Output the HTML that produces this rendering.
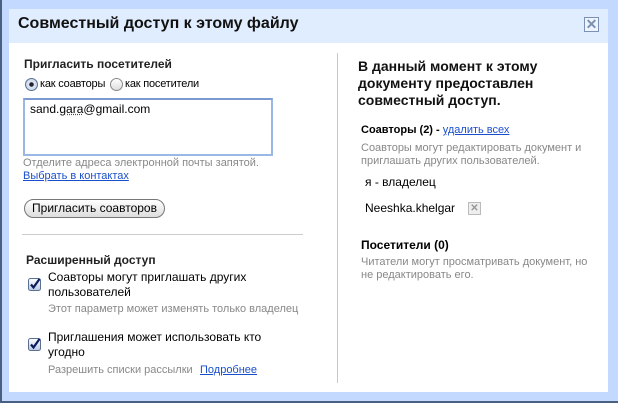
<!DOCTYPE html>
<html><head><meta charset="utf-8"><style>
*{margin:0;padding:0;box-sizing:border-box}
body{width:618px;height:403px;overflow:hidden;background:#c3d9ff;font-family:"Liberation Sans",Arial,sans-serif;position:relative;color:#000}
.a{position:absolute;white-space:nowrap}
#outer{position:absolute;left:0;top:0;width:618px;height:403px;border-left:2px solid #4a6080;border-bottom:2px solid #4a6080}
#title{position:absolute;left:9px;top:9px;width:599px;height:34px;background:#e0edfe}
#body{position:absolute;left:9px;top:43px;width:599px;height:349px;background:#fff}
.g{color:#888;font-size:11px;line-height:13px}
.l{color:#1a4fcc;text-decoration:underline}
.cb{position:absolute;width:13px;height:13px}
</style></head><body>
<div id="outer"></div>
<div id="title"></div>
<div id="body"></div>
<div class="a" style="left:18px;top:15px;font-size:16px;font-weight:bold;color:#111">Совместный доступ к этому файлу</div>
<div class="a" style="left:584px;top:17px;width:15px;height:15px;border:1px solid #7a90b4;background:#eef3fc;color:#7a90b4;font-size:14px;line-height:13px;text-align:center;font-weight:bold">✕</div>
<div class="a" style="left:337px;top:53px;width:1px;height:330px;background:#c8c8c8"></div>

<div class="a" style="left:24px;top:57px;font-size:12px;font-weight:bold;color:#222">Пригласить посетителей</div>
<div class="a" style="left:25px;top:78px;width:13px;height:13px;border-radius:50%;border:1px solid #5a6f92;background:radial-gradient(circle,#223 0 2px,#dde6f4 2.5px,#c0cde4)"></div>
<div class="a" style="left:40px;top:78px;font-size:11px;letter-spacing:-0.2px">как соавторы</div>
<div class="a" style="left:110px;top:78px;width:13px;height:13px;border-radius:50%;border:1px solid #888;background:linear-gradient(#fff,#ddd)"></div>
<div class="a" style="left:125px;top:78px;font-size:11px;letter-spacing:-0.2px">как посетители</div>
<div class="a" style="left:23px;top:98px;width:250px;height:58px;border:2px solid #9ab8e4;border-top-color:#7a9ad0"></div>
<div class="a" style="left:30px;top:102px;font-size:12px">sand.<span style="text-decoration:underline dotted red">gara</span>@gmail.com</div>
<div class="a g" style="left:23px;top:157px">Отделите адреса электронной почты запятой.</div>
<div class="a l" style="left:23px;top:170px;font-size:11px;line-height:13px">Выбрать в контактах</div>
<div class="a" style="left:24px;top:199px;width:141px;height:19px;border:1px solid #777;border-radius:10px;background:linear-gradient(#fff,#ddd);font-size:12px;text-align:center;line-height:17px">Пригласить соавторов</div>
<div class="a" style="left:22px;top:234px;width:281px;height:1px;background:#ccc"></div>
<div class="a" style="left:26px;top:253px;font-size:12px;font-weight:bold;color:#222">Расширенный доступ</div>
<svg class="cb" style="left:28px;top:278px" viewBox="0 0 13 13"><defs><linearGradient id="gg" x1="0" y1="0" x2="0" y2="1"><stop offset="0" stop-color="#fff"/><stop offset="1" stop-color="#b8c8e4"/></linearGradient></defs><rect x="0.5" y="0.5" width="12" height="12" rx="2" fill="url(#gg)" stroke="#5a6f92"/><path d="M3 6.5 L5.5 9.5 L11.5 1" fill="none" stroke="#0a1a5a" stroke-width="2.2"/></svg>
<div class="a" style="left:48px;top:270px;font-size:12px;line-height:15px">Соавторы могут приглашать других<br>пользователей</div>
<div class="a g" style="left:48px;top:303px">Этот параметр может изменять только владелец</div>
<svg class="cb" style="left:28px;top:338px" viewBox="0 0 13 13"><rect x="0.5" y="0.5" width="12" height="12" rx="2" fill="url(#gg)" stroke="#5a6f92"/><path d="M3 6.5 L5.5 9.5 L11.5 1" fill="none" stroke="#0a1a5a" stroke-width="2.2"/></svg>
<div class="a" style="left:48px;top:330px;font-size:12px;line-height:15px">Приглашения может использовать кто<br>угодно</div>
<div class="a g" style="left:48px;top:364px">Разрешить списки рассылки</div>
<div class="a l" style="left:200px;top:364px;font-size:11px;line-height:13px">Подробнее</div>

<div class="a" style="left:358px;top:58px;font-size:14px;font-weight:bold;line-height:17px;color:#111">В данный момент к этому<br>документу предоставлен<br>совместный доступ.</div>
<div class="a" style="left:361px;top:124px;font-size:11px;font-weight:bold">Соавторы (2) - <span class="l" style="font-weight:normal">удалить всех</span></div>
<div class="a g" style="left:361px;top:142px">Соавторы могут редактировать документ и<br>приглашать других пользователей.</div>
<div class="a" style="left:365px;top:175px;font-size:12px">я - владелец</div>
<div class="a" style="left:365px;top:201px;font-size:12px">Neeshka.khelgar</div>
<div class="a" style="left:468px;top:202px;width:13px;height:13px;border:1px solid #bbb;background:#eee;color:#999;font-size:10px;line-height:11px;text-align:center;font-weight:bold">✕</div>
<div class="a" style="left:361px;top:238px;font-size:12px;font-weight:bold">Посетители (0)</div>
<div class="a g" style="left:361px;top:256px">Читатели могут просматривать документ, но<br>не редактировать его.</div>
</body></html>
